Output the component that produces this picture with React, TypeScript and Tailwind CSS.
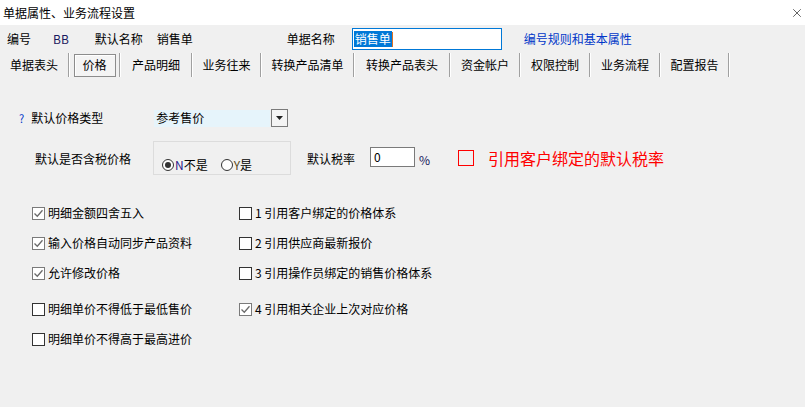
import { X } from 'lucide-react';

const font = { fontFamily: '"Noto Sans CJK SC", "Microsoft YaHei", sans-serif' };

const tabs = [
  { label: '单据表头', w: 68 },
  { label: '价格', w: 49, active: true },
  { label: '产品明细', w: 70 },
  { label: '业务往来', w: 67 },
  { label: '转换产品清单', w: 91 },
  { label: '转换产品表头', w: 94 },
  { label: '资金帐户', w: 68 },
  { label: '权限控制', w: 68 },
  { label: '业务流程', w: 68 },
  { label: '配置报告', w: 67 },
];

function CheckBox({ checked, label }: { checked?: boolean; label: string }) {
  return (
    <div className="flex items-center h-[16px]">
      <span
        className={`w-[13px] h-[13px] border flex items-center justify-center bg-white ${
          checked ? 'border-[#7a7a7a]' : 'border-[#333]'
        }`}
      >
        {checked && (
          <svg width="11" height="11" viewBox="0 0 11 11">
            <path d="M1.5 5.5 L4.3 8.3 L9.5 2.3" fill="none" stroke="#6a6a6a" strokeWidth="1.3" />
          </svg>
        )}
      </span>
      <span className="ml-[3px] text-[12px] text-black leading-none">{label}</span>
    </div>
  );
}

function Radio({ checked, letter, rest, letterColor }: { checked?: boolean; letter: string; rest: string; letterColor: string }) {
  return (
    <div className="flex items-center">
      <span className="w-[12px] h-[12px] rounded-full border border-[#333] bg-white flex items-center justify-center">
        {checked && <span className="w-[6px] h-[6px] rounded-full bg-[#333]" />}
      </span>
      <span className="ml-[1px] text-[12px] leading-none">
        <span className={letterColor}>{letter}</span>
        {rest}
      </span>
    </div>
  );
}

export default function App() {
  return (
    <div className="w-[805px] h-[407px] bg-[#f0f0f0] text-black flex flex-col text-[12px] overflow-hidden" style={font}>
      <div className="h-[25px] bg-white flex items-center justify-between pl-[3px] pr-[1px] shrink-0">
        <span className="text-[12px]">单据属性、业务流程设置</span>
        <X size={14} strokeWidth={1.2} className="text-[#222]" />
      </div>

      <div className="h-[28px] flex items-center shrink-0">
        <span className="ml-[7px]">编号</span>
        <span className="ml-[22px] text-[#1a1a60]">BB</span>
        <span className="ml-[26px]">默认名称</span>
        <span className="ml-[14px]">销售单</span>
        <span className="ml-[94px]">单据名称</span>
        <div className="ml-[17px] w-[150px] h-[22px] border border-[#0078d7] bg-white flex items-center px-[1px]">
          <span className="bg-[#0078d7] text-white leading-[16px] px-[1px]">销售单</span>
          <span className="w-[1px] h-[15px] bg-[#e07020]" />
        </div>
        <span className="ml-[22px] text-[#0037c8]">编号规则和基本属性</span>
      </div>

      <div className="h-[24px] flex items-stretch shrink-0">
        {tabs.map((t) => (
          <div key={t.label} className="flex items-stretch">
            <div className="flex items-center justify-center" style={{ width: t.w }}>
              {t.active ? (
                <span className="w-[42px] h-[23px] border border-[#8c8c8c] shadow-[inset_1px_1px_0_#fff] bg-[#f4f4f4] flex items-center justify-center">
                  {t.label}
                </span>
              ) : (
                <span>{t.label}</span>
              )}
            </div>
            <span className="w-[2px] border-l border-[#a0a0a0] border-r border-r-white" />
          </div>
        ))}
      </div>

      <div className="flex items-center mt-[32px] h-[18px]">
        <span className="ml-[19px] text-[#0037c8] text-[11px]">?</span>
        <span className="ml-[7px]">默认价格类型</span>
        <div className="ml-[51px] w-[116px] h-[17px] bg-[#e6f4fb] flex items-center pl-[2px]">参考售价</div>
        <div className="ml-[1px] w-[17px] h-[18px] border border-[#7a7a7a] bg-[#f4f4f4] flex items-center justify-center">
          <svg width="7" height="4" viewBox="0 0 7 4">
            <path d="M0 0 H7 L3.5 4 Z" fill="#222" />
          </svg>
        </div>
      </div>

      <div className="flex items-start mt-[14px]">
        <span className="ml-[35px] mt-[9px]">默认是否含税价格</span>
        <div className="ml-[22px] w-[138px] h-[34px] border border-[#dcdcdc] flex items-end pb-[3px] pl-[8px] gap-[13px]">
          <Radio checked letter="N" rest="不是" letterColor="text-[#2a1a8a]" />
          <Radio letter="Y" rest="是" letterColor="text-[#5a4a20]" />
        </div>
        <span className="ml-[16px] mt-[9px]">默认税率</span>
        <div className="ml-[15px] mt-[6px] w-[45px] h-[20px] border border-[#7a7a7a] bg-white pl-[3px] leading-[17px]">0</div>
        <span className="ml-[4px] mt-[10px] text-[#14145a]">%</span>
        <span className="ml-[28px] mt-[9px] w-[16px] h-[16px] border border-[#ff0000]" />
        <span className="ml-[14px] mt-[7px] text-[16px] text-[#ff0000] leading-[20px]">引用客户绑定的默认税率</span>
      </div>

      <div className="flex mt-[30px] ml-[32px]">
        <div className="w-[207px] flex flex-col">
          <div className="h-[30px]"><CheckBox checked label="明细金额四舍五入" /></div>
          <div className="h-[30px]"><CheckBox checked label="输入价格自动同步产品资料" /></div>
          <div className="h-[36px]"><CheckBox checked label="允许修改价格" /></div>
          <div className="h-[30px]"><CheckBox label="明细单价不得低于最低售价" /></div>
          <div className="h-[30px]"><CheckBox label="明细单价不得高于最高进价" /></div>
        </div>
        <div className="flex flex-col">
          <div className="h-[30px]"><CheckBox label="1 引用客户绑定的价格体系" /></div>
          <div className="h-[30px]"><CheckBox label="2 引用供应商最新报价" /></div>
          <div className="h-[36px]"><CheckBox label="3 引用操作员绑定的销售价格体系" /></div>
          <div className="h-[30px]"><CheckBox checked label="4 引用相关企业上次对应价格" /></div>
        </div>
      </div>
    </div>
  );
}
